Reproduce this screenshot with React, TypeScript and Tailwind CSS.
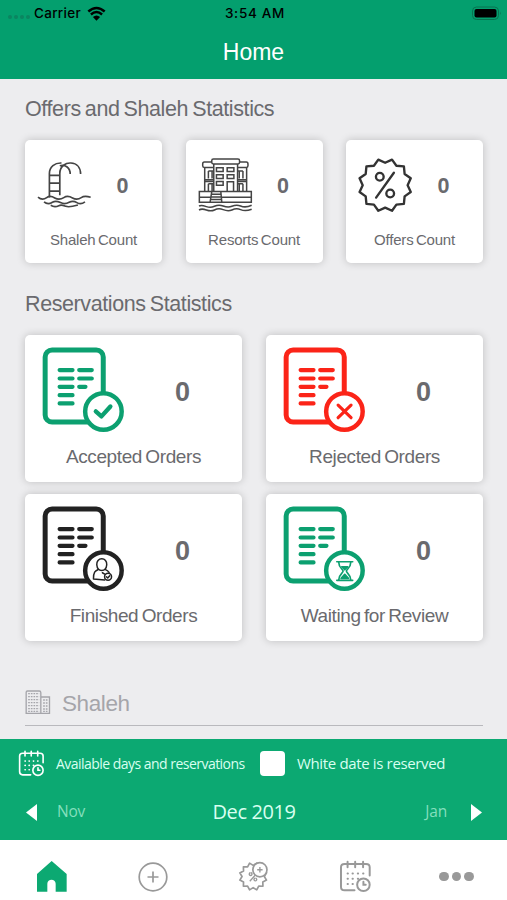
import type { ReactNode } from "react";

const badgePoints = (cx: number, cy: number, outer: number, inner: number) =>
  Array.from({ length: 24 }, (_, i) => {
    const angle = (i * 15 * Math.PI) / 180;
    const r = i % 2 === 0 ? inner : outer;
    return `${cx + r * Math.sin(angle)},${cy - r * Math.cos(angle)}`;
  }).join(" ");

const PoolIcon = () => (
  <svg viewBox="51 82 164 164" className="w-[55px] h-[55px]" fill="none" stroke="#444" strokeWidth="5">
    <path d="M88 203V131C88 111 104 99 124 100M119 196V131C119 108 138 99 152 100C170 101 181 114 181 133M119 108C136 104 150 114 150 133" />
    <path d="M88 137H119M88 160H119M88 184H119" />
    <path d="M54 202C62 209 72 209 80 203S96 199 104 204S122 209 131 203S148 199 157 204S174 209 183 203S200 199 211 202" />
    <path d="M72 216C79 222 89 222 97 217S113 214 121 218S138 222 147 217S162 213 170 218S186 222 194 216" />
    <path d="M92 226C100 231 108 231 116 227S129 226 137 229S153 231 173 225" />
  </svg>
);

const ResortIcon = () => (
  <svg viewBox="532 82 164 164" className="w-[55px] h-[55px]" fill="none" stroke="#444" strokeWidth="4.5">
    <rect x="573" y="88" width="83" height="15" rx="5" />
    <path d="M579 103V184M650 103V184M573 97H551Q546 97 546 103V108Q546 113 551 113H579M656 97H676Q681 97 681 103V108Q681 113 676 113H650" />
    <path d="M552 113V184M677 113V184M563 124H579M563 124V146M574 124V146M552 150H579M552 155H579M563 162H579M563 162V184M574 162V184M666 124H650M666 124V146M655 124V146M677 150H650M677 155H650M666 162H650M666 162V184M655 162V184" />
    <path d="M587 114H607V125H587ZM619 114H639V125H619ZM587 135H607V146H587ZM619 135H639V146H619ZM587 155H607V166H587ZM619 184V156H638V184" />
    <path d="M536 185H691V217H536ZM536 202H570M600 202H691M573 185L568 217M600 185L603 217M572 193H601M571 201H602M570 209H602" />
    <path d="M535 228C543 224 549 227 557 230S573 233 581 229S597 224 607 228S624 233 633 229S650 224 659 228S676 233 692 226M535 240C543 235 549 237 557 240S573 244 581 240S597 235 607 239S624 244 633 240S650 235 659 239S676 244 692 238" />
  </svg>
);

const OfferIcon = () => (
  <svg viewBox="295 82 164 164" className="w-[55px] h-[55px]" fill="none" stroke="#333" strokeWidth="7" strokeLinejoin="round">
    <polygon points={badgePoints(376, 166, 79, 67)} />
    <circle cx="360" cy="141" r="11.5" />
    <circle cx="391" cy="191" r="11.5" />
    <path d="M402 129L349 203" strokeLinecap="round" />
  </svg>
);

const OrderIcon = ({ color, children }: { color: string; children: ReactNode }) => (
  <svg viewBox="68 50 250 260" className="w-[83px] h-[87px]" fill="none" stroke={color} strokeLinecap="round" strokeLinejoin="round">
    <rect x="77.500" y="61" width="175" height="217" rx="21" strokeWidth="15" />
    <path
      d="M121 121.500H160M180 121.500H218M121 147H160M180 147H218M121 172H160M180 172H199M121 197H160M121 222H160"
      strokeWidth="12.500"
    />
    <circle cx="253" cy="246" r="55" fill="white" strokeWidth="13.500" />
    {children}
  </svg>
);

const CheckMark = () => <path d="M230 246L247 261L274 231" strokeWidth="13" />;

const CrossMark = () => <path d="M234 227L273 265M273 227L234 265" strokeWidth="9.500" />;

const UserMark = () => (
  <g strokeWidth="4.500">
    <path d="M233 229C232 218 239 211 248 211S264 218 263 229C262 240 255 246 248 246S234 240 233 229Z" />
    <path d="M238 243C228 248 223 250 223 272L257 275M258 243C264 246 267 248 270 252" />
    <circle cx="267" cy="265" r="10.500" fill="white" />
    <path d="M262 265L266 269L272 262M250 253L257 257" />
  </g>
);

const HourglassMark = () => (
  <g strokeWidth="5">
    <path d="M230 220H278M230 276H278M236 222C236 239 249 242 249 248S236 258 236 274M272 222C272 239 259 242 259 248S272 258 272 274" />
    <path d="M245 235H263L254 244ZM243 270L254 258L265 270Z" fill="#0ca070" />
  </g>
);

const BuildingIcon = () => (
  <svg viewBox="75 28 77 72" className="w-[26px] h-6" fill="none" stroke="#a5a5aa" strokeWidth="4">
    <path d="M78 98V35Q78 31 82 31H117Q122 31 122 36V98ZM122 49H148V98H122" />
    <path d="M84 39H117M84 48H117M84 57H117M84 66H117M84 75H117M84 84H117M84 92H117" strokeDasharray="5 3" />
    <path d="M129 58H143M129 67H143M129 76H143M129 85H143M129 92H143" strokeDasharray="5 3" />
  </svg>
);

const CalendarIcon = ({ className }: { className: string }) => (
  <svg viewBox="324 76 100 100" className={className} fill="none" stroke="currentColor" strokeWidth="6" strokeLinecap="round">
    <path d="M371 168H341Q330 168 330 157V98Q330 88 341 88H406Q417 88 417 98V123" />
    <path d="M350 81V98M373 81V98M397 81V98" />
    <path d="M350 117H351M365 117H366M381 117H382M397 117H398M350 133H351M365 133H366M381 133H382M350 149H351M365 149H366" />
    <circle cx="398" cy="151" r="19" />
    <path d="M398 142V151H405" />
  </svg>
);

const HomeIcon = () => (
  <svg viewBox="110 79 90 93" className="w-[30px] h-[31px]" fill="#0ca972">
    <path d="M154 79L199 118V171H166V147C166 131 141 131 141 147V171H110V118Z" />
  </svg>
);

const PlusIcon = () => (
  <svg viewBox="0 0 30 30" className="w-[30px] h-[30px]" fill="none" stroke="#999" strokeWidth="1.700">
    <circle cx="15" cy="15" r="13.800" />
    <path d="M9.500 15H20.500M15 9.500V20.500" />
  </svg>
);

const AddOfferIcon = () => (
  <svg viewBox="25 79 92 92" className="w-[31px] h-[31px]" fill="none" stroke="#999" strokeWidth="5" strokeLinejoin="round">
    <polygon points={badgePoints(70, 125, 41, 33)} />
    <path d="M78 119L60 139M76 130A4 4 0 1 0 77 130M62 114A4 4 0 1 0 63 114" strokeWidth="4" />
    <circle cx="90" cy="105" r="21" fill="white" />
    <path d="M82 105H98M90 97V113" strokeWidth="4" />
  </svg>
);

const stats = [
  { label: "Shaleh Count", icon: <PoolIcon /> },
  { label: "Resorts Count", icon: <ResortIcon /> },
  { label: "Offers Count", icon: <OfferIcon /> },
];

const orders = [
  { label: "Accepted Orders", color: "#0ca070", mark: <CheckMark /> },
  { label: "Rejected Orders", color: "#fb2418", mark: <CrossMark /> },
  { label: "Finished Orders", color: "#222222", mark: <UserMark /> },
  { label: "Waiting for Review", color: "#0ca070", mark: <HourglassMark /> },
];

const App = () => {
  return (
    <main className="w-[507px] h-[900px] flex flex-col overflow-hidden bg-[#ededef] font-['Liberation_Sans',sans-serif] text-[#6a6a6e] whitespace-nowrap">
      <header className="h-[79px] shrink-0 bg-[#049f6e]">
        <div className="h-[26px] pl-2 pr-[5px] grid grid-cols-[1fr_auto_1fr] items-center text-black font-['Inter',sans-serif] font-medium text-[13.5px] tracking-[0.3px]">
          <div className="flex items-center">
            <div className="flex gap-[2px] mt-2 mr-1">
              {[0, 1, 2, 3].map((dot) => (
                <span key={dot} className="w-1 h-1 rounded-full bg-[#0b8560]" />
              ))}
            </div>
            <span>Carrier</span>
            <svg viewBox="264 16 58 44" className="w-[19px] h-[15px] ml-[6px]" fill="none" stroke="black" strokeWidth="7.500">
              <path d="M268 32Q293 10 318 32M276 41Q293 26 310 41" />
              <path d="M282 49Q293 39 304 49L293 60Z" fill="black" stroke="none" />
            </svg>
          </div>
          <span className="tracking-[0.7px]">3:54 AM</span>
          <svg viewBox="0 0 31 15" className="w-[31px] h-[15px] justify-self-end">
            <rect x="1.500" y="1" width="26" height="12.500" rx="4" fill="none" stroke="#087350" />
            <rect x="3.500" y="3" width="22" height="8.500" rx="2" fill="black" />
            <path d="M29 5.500Q30.500 7 29 9Z" fill="#087350" />
          </svg>
        </div>
        <h1 className="text-center text-white text-[23px] leading-[52px]">Home</h1>
      </header>

      <section className="pl-[25px] pr-6 pt-4 shrink-0">
        <h2 className="text-[21.5px] leading-[28px] tracking-[-0.4px] [word-spacing:-1.5px]">Offers and Shaleh Statistics</h2>
        <div className="grid grid-cols-3 gap-[23.5px] mt-[17px]">
          {stats.map((stat) => (
            <div key={stat.label} className="h-[123px] pt-[17px] rounded-[5px] bg-white shadow-[0_0_8px_rgba(0,0,0,0.2)]">
              <div className="flex items-center pl-3">
                {stat.icon}
                <span className="ml-[24.5px] mt-[3px] font-bold text-[21.5px]">0</span>
              </div>
              <p className="mt-[18px] text-center text-[15px] leading-5 tracking-[-0.2px] [word-spacing:-1.5px]">{stat.label}</p>
            </div>
          ))}
        </div>
      </section>

      <section className="pl-[25px] pr-6 pt-[27px] shrink-0">
        <h2 className="text-[21.5px] leading-[28px] tracking-[-0.4px] [word-spacing:-1.5px]">Reservations Statistics</h2>
        <div className="grid grid-cols-2 gap-x-6 gap-y-3 mt-[17px]">
          {orders.map((order) => (
            <div key={order.label} className="h-[147px] pt-[11px] rounded-[5px] bg-white shadow-[0_0_8px_rgba(0,0,0,0.2)]">
              <div className="flex items-center pl-[17px]">
                <OrderIcon color={order.color}>{order.mark}</OrderIcon>
                <span className="ml-[50px] mt-[6px] font-bold text-[27px]">0</span>
              </div>
              <p className="mt-3 text-center text-[19px] leading-6 tracking-[-0.4px] [word-spacing:-1.5px]">{order.label}</p>
            </div>
          ))}
        </div>
      </section>

      <div className="ml-[25px] mr-6 mt-[49px] h-9 shrink-0 flex items-start border-b border-[#b9b9bd] text-[#a5a5aa]">
        <BuildingIcon />
        <span className="ml-[11px] text-[22.5px] leading-7 tracking-[-0.4px]">Shaleh</span>
      </div>

      <section className="mt-auto h-[101px] shrink-0 bg-[#0ca972] text-[#d9fff0] font-['Open_Sans',sans-serif]">
        <div className="flex items-center h-[49px] pl-[18px]">
          <CalendarIcon className="w-[27px] h-[27px] text-white" />
          <span className="ml-[11px] w-[189px] text-[14px] tracking-[-0.53px]">Available days and reservations</span>
          <span className="ml-[15px] w-[25px] h-[25px] rounded-[4px] bg-white" />
          <span className="ml-3 text-[15px] tracking-[-0.35px]">White date is reserved</span>
        </div>
        <div className="grid grid-cols-[1fr_auto_1fr] items-center h-[48px] pl-[26px] pr-[25px]">
          <div className="flex items-center gap-5">
            <svg viewBox="0 0 11 17" className="w-[11px] h-[17px]" fill="white">
              <path d="M11 0V17L0 8.500Z" />
            </svg>
            <span className="text-[15.5px] tracking-[-0.2px] text-[#84dfbd]">Nov</span>
          </div>
          <span className="text-[20px] tracking-[-0.4px]">Dec 2019</span>
          <div className="flex items-center justify-end gap-6">
            <span className="text-[15.5px] tracking-[-0.2px] text-[#84dfbd]">Jan</span>
            <svg viewBox="0 0 11 17" className="w-[11px] h-[17px]" fill="white">
              <path d="M0 0V17L11 8.500Z" />
            </svg>
          </div>
        </div>
      </section>

      <nav className="h-[60px] pt-[13px] pl-[1px] shrink-0 grid grid-cols-5 place-items-center bg-white">
        <HomeIcon />
        <PlusIcon />
        <AddOfferIcon />
        <CalendarIcon className="w-[33px] h-[33px] text-[#999]" />
        <div className="flex gap-[3px]">
          {[0, 1, 2].map((dot) => (
            <span key={dot} className="w-[9.5px] h-[9.5px] rounded-full bg-[#999]" />
          ))}
        </div>
      </nav>
    </main>
  );
};

export default App;
